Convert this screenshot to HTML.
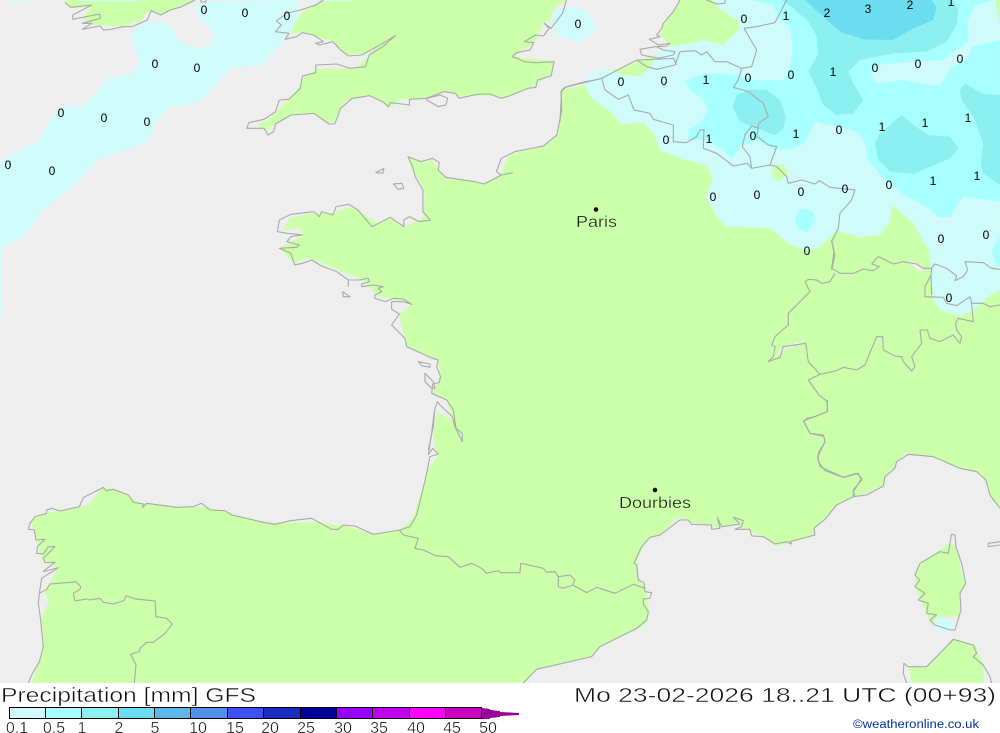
<!DOCTYPE html>
<html><head><meta charset="utf-8"><style>
html,body{margin:0;padding:0;background:#fff}
svg{display:block}
.c *{fill:none;stroke:#aaaaaa;stroke-width:1.1;vector-effect:non-scaling-stroke;stroke-linejoin:round}
.n text{font:12px "Liberation Sans",sans-serif;fill:#000;text-anchor:middle}
.l text{font:16px "Liberation Sans",sans-serif;fill:#111;text-anchor:middle;stroke:#fff;stroke-width:.35}
</style></head><body>
<svg width="1000" height="733" viewBox="0 0 1000 733" xmlns="http://www.w3.org/2000/svg">
<rect width="1000" height="683" fill="#eeeeee"/>
<g fill="#ccffaa">
<polygon points="409,158 425,162 432,160 444,177 475,182 484,184 497,178 501,173 509,155 543,146 557,135 562,107 562,90 585,85 610,70 1000,0 1000,507 992,500 988,487 980,473 960,468 933,457 905,453 897,462 893,470 885,478 883,485 867,493 853,497 837,505 827,518 815,527 815,535 790,543 777,546 763,537 752,532 748,528 733,525 717,528 712,525 690,522 678,517 660,535 647,540 637,560 638,577 645,587 650,613 647,622 640,628 600,647 592,657 537,669 523,683 32,683 37,667 42,652 43,633 41,618 49,602 45,592 58,568 43,560 39,550 31,520 38,515 88,505 103,487 113,489 128,495 138,502 173,507 207,507 227,512 267,523 320,522 333,525 343,525 373,534 400,530 413,518 428,470 438,455 433,437 437,412 453,420 452,418 447,400 432,393 438,383 440,373 438,360 433,358 407,347 399,315 412,304 375,295 367,283 358,278 343,272 310,258 293,263 280,248 303,235 300,228 283,230 290,218 313,213 333,213 350,207 360,212 377,223 372,227 388,217 400,225 405,227 423,218 425,197 421,183 411,168"/>
<g transform="scale(.3827,.3333)">
<polygon points="845,0 790,35 775,60 760,100 800,100 870,125 905,165 950,160 1030,107 985,140 930,205 830,205 790,235 780,265 745,310 700,360 670,375 695,395 720,370 760,345 820,340 860,370 875,360 900,305 965,287 1005,310 1015,325 1040,300 1120,292 1165,275 1200,290 1300,287 1320,295 1385,262 1440,225 1448,185 1380,175 1340,170 1395,130 1420,70 1440,60 1445,30 1480,0"/>
<polygon points="170,0 170,10 190,25 240,20 215,55 245,75 320,80 370,60 385,35 420,45 470,20 510,0"/>
</g>
<g transform="translate(500,400) scale(.3333)">
<polygon points="1345,430 1370,440 1385,520 1395,550 1380,590 1380,650 1310,650 1295,680 1280,640 1245,560 1245,525 1260,490 1320,450"/>
<polygon points="1225,800 1280,800 1360,718 1425,735 1450,795 1452,849 1235,849"/>
</g>
</g>
<g fill="#eeeeee" transform="translate(740,240) scale(.3333)">
<polygon points="105,352 130,320 200,298 170,315 135,330"/>
<polygon points="500,62 530,70 555,85 540,95"/>
</g>
<polygon fill="#d0fbfb" transform="translate(500,400) scale(.3333)" points="1320,650 1363,670 1360,685 1330,702 1305,675"/>

<!-- rain west -->
<g fill="#d0fbfb">
<g transform="scale(.3827,.3333)">
<polygon points="0,490 50,450 100,425 125,370 160,320 220,315 285,235 345,220 365,185 340,105 370,70 420,62 445,80 470,125 520,148 555,130 558,95 515,45 512,20 540,5 780,0 775,60 745,120 685,195 600,205 560,260 520,305 440,325 410,360 385,425 255,480 190,560 120,620 65,705 0,745"/>
<rect x="20" y="0" width="65" height="3"/><rect x="200" y="0" width="165" height="3"/><rect x="800" y="0" width="115" height="3"/><rect x="0" y="745" width="3" height="205"/>
</g>
<polygon points="550,22 556,10 570,6 585,10 595,23 592,35 577,42 563,38 553,30"/>
</g>
<g transform="translate(560,0) scale(.3333)">
<polygon fill="#d0fbfb" points="360,0 470,20 530,60 540,85 490,135 430,120 390,130 330,140 300,155 290,165 270,200 240,228 190,225 170,212 120,208 85,225 75,255 90,290 150,335 185,372 250,368 280,400 300,450 360,475 440,495 458,540 437,590 470,650 500,680 630,685 690,735 740,752 775,745 830,692 900,712 960,705 990,665 997,615 1060,670 1105,750 1115,830 1120,900 1140,930 1200,950 1240,930 1290,885 1320,870 1320,0"/>
<polygon fill="#ccffaa" points="635,510 650,490 670,495 688,518 655,545 640,530"/>
<polygon fill="#ccffaa" points="360,0 345,30 310,75 300,105 320,125 330,140 390,130 430,120 490,135 540,85 530,60 470,20 460,0"/>
<polygon fill="#ccffaa" points="170,212 230,185 290,165 270,200 240,228 190,225"/>
<polygon fill="#ccffaa" points="1305,0 1320,65 1320,0"/>
<polygon fill="#eeeeee" points="1040,778 1085,795 1090,815 1065,800"/>
<g fill="#a8ffff">
<polygon points="575,0 640,15 650,50 690,80 698,140 690,200 670,240 580,240 530,225 440,220 375,240 390,270 430,300 442,330 425,365 385,390 385,420 440,420 490,450 515,480 540,440 590,420 640,450 700,445 735,430 765,365 830,380 880,390 910,415 925,480 960,525 1040,590 1100,620 1140,652 1170,650 1210,590 1320,605 1320,120 1235,140 1225,175 1170,205 1145,250 1115,258 1030,240 950,250 935,225 950,195 1060,185 1150,180 1225,125 1225,60 1245,15 1300,0"/>
<polygon points="705,650 725,625 755,630 768,660 740,700 710,680"/>
<polygon points="1295,750 1320,710 1320,800 1305,790"/>
</g>
<g fill="#8cf0f0">
<polygon points="665,0 700,25 745,65 770,110 775,160 745,215 770,265 790,315 830,345 880,340 910,300 880,250 865,215 900,180 1000,160 1100,155 1160,125 1190,75 1195,30 1180,0"/>
<polygon points="517,320 530,285 570,268 620,270 660,300 678,350 670,385 645,405 590,385 540,365"/>
<polygon points="945,430 960,400 1025,345 1060,375 1105,405 1170,410 1195,445 1170,475 1060,522 990,515 955,480"/>
<polygon points="1200,270 1215,250 1265,280 1320,285 1320,555 1270,520 1262,490 1270,430 1240,350 1205,300"/>
</g>
<polygon fill="#6cdcf0" points="735,0 790,50 840,95 910,118 1000,120 1050,90 1120,60 1130,20 1115,0"/>
</g>

<!-- coast and borders -->
<g class="c">
<g transform="scale(.3827,.3333)">
<path d="M845,0 L825,15 L785,30 L750,40 L722,62 L735,75 L720,95 L755,100 L745,118 L775,110 L790,98 L820,105 L845,125 L825,130 L835,135 L870,125 L890,150 L910,168 L945,165 L985,140 L1033,107 L1000,140 L965,165 L955,200 L915,205 L880,192 L825,195 L825,218 L790,228 L785,265 L755,298 L730,300 L720,335 L690,358 L650,368 L645,385 L690,385 L700,405 L715,395 L720,372 L760,345 L800,342 L820,340 L845,360 L860,372 L875,372 L890,325 L920,295 L965,287 L1000,305 L1015,320 L1020,308 L1050,312 L1070,315 L1070,298 L1115,295 L1160,275 L1190,280 L1200,295 L1250,282 L1280,282 L1310,295 L1330,288 L1380,265 L1400,262 L1405,240 L1440,228 L1448,185 L1400,188 L1370,185 L1352,175 L1338,170 L1350,158 L1385,150 L1395,128 L1370,125 L1400,105 L1420,108 L1435,85 L1422,70 L1440,85 L1470,40 L1480,0"/>
<path d="M1115,295 L1150,285 L1170,295 L1165,315 L1145,320 L1115,300 Z"/>
<path d="M170,8 L185,22 L240,15 L190,45 L190,58 L260,42 L262,55 L215,70 L240,70 L215,88 L262,78 L270,90 L290,88 L320,80 L345,80 L385,60 L395,32 L420,45 L445,30 L470,22 L510,0"/>
<path d="M525,0 L525,6 L538,6 L538,0"/>
<path d="M1340,518 L1310,525 L1297,515 L1310,475 L1345,455 L1420,438 L1455,405 L1468,330 L1466,275 L1480,260 L1530,245 L1568,237"/>
<path d="M1310,525 L1265,552 L1240,545 L1165,532 L1145,510 L1148,488 L1130,475 L1100,485 L1066,470 L1078,500 L1085,530 L1105,570 L1105,635 L1125,660 L1095,665 L1070,650 L1055,660 L1055,680 L1020,652 L972,680 L935,630 L912,613 L878,620 L870,645 L840,635 L835,650 L820,635 L760,643 L730,660 L725,695 L750,700 L790,705 L760,710 L750,725 L782,735 L775,742 L730,745 L760,760 L770,795 L790,790 L815,780 L840,798 L880,815 L910,840"/>
<path d="M982,518 L1003,505 L1000,520 Z"/><path d="M1028,552 L1050,550 L1055,565 L1040,568 Z"/>
</g>
<g transform="translate(250,200) scale(.3333)">
<path d="M295,260 L295,240 L328,240 L355,235 L358,245 L335,252 L335,260 L370,255 L400,260 L385,265 L395,275 L375,285 L375,295 L405,305 L430,295 L460,297 L485,313 L460,305 L425,305 L425,328 L448,342 L425,375 L445,395 L465,415 L470,440 L548,475 L565,480 L560,500 L572,530 L567,548 L548,552 L545,580 L590,600 L610,630 L618,685 L637,700 L637,725 L615,680 L607,650 L570,615 L562,605 L555,625 L550,680 L535,750"/>
<path d="M278,275 L300,290 L280,290 Z"/><path d="M505,485 L540,492 L540,502 L515,497 Z"/><path d="M525,520 L550,545 L555,565 L545,565 L525,545 Z"/>
</g>
<g transform="translate(0,400) scale(.3333)">
<path d="M1285,165 L1298,145 L1315,162 L1290,170 L1280,220 L1265,285 L1250,345 L1230,380 L1200,390 L1120,403 L1065,378 L1030,375 L1015,388 L995,388 L935,355 L870,362 L825,373 L795,368 L695,345 L675,332 L630,330 L605,310 L580,320 L530,322 L440,310 L428,322 L430,312 L400,307 L385,285 L340,268 L318,272 L310,262 L250,293 L238,320 L180,333 L155,325 L140,330 L140,340 L105,350 L90,370 L85,388 L103,390 L108,420 L135,418 L112,440 L110,460 L130,462 L145,440 L165,440 L145,460 L130,475 L135,488 L165,487 L135,510 L130,515 L175,503 L125,535 L118,580 L115,610 L122,660 L130,740 L118,785 L95,825 L85,849"/>
<path d="M1303,35 L1295,100 L1285,165"/>
<path d="M118,580 L140,568 L150,552 L215,547 L228,545 L242,560 L240,568 L220,580 L225,603 L262,597 L270,600 L300,595 L310,607 L340,612 L372,602 L378,587 L405,597 L465,603 L468,650 L500,655 L517,672 L495,700 L460,727 L440,727 L420,745 L418,755 L392,763 L408,795 L403,849"/>
<path d="M1198,390 L1210,405 L1255,415 L1245,445 L1270,450 L1310,468 L1345,470 L1380,502 L1415,490 L1445,505 L1460,520 L1495,512 L1500,517"/>
</g>
<g transform="translate(500,400) scale(.3333)">
<path d="M0,518 L60,518 L62,490 L130,505 L140,517 L165,515 L175,530 L175,560 L190,565 L218,555 L260,578 L290,562 L345,580 L400,553 L435,565"/>
<path d="M175,530 L210,525 L225,540 L218,555"/>
<path d="M435,575 L455,578 L450,595 L430,597 L430,612 L445,635 L440,660 L410,685 L300,740 L275,770 L110,808 L70,849"/>
<path d="M435,575 L432,548 L415,540 L410,495 L402,490 L425,440 L450,412 L480,405 L540,360 L565,360 L575,373 L635,375 L635,388 L660,385 L652,352 L665,380 L700,375 L720,372 L700,352 L730,362 L725,380 L705,388 L750,388 L755,408 L790,410 L825,432 L860,425 L875,432 L870,425 L945,405 L942,385 L975,358 L1010,315 L1060,290 L1100,285 L1150,258 L1155,230 L1185,205 L1190,185 L1225,163 L1300,170 L1380,205 L1430,215 L1458,240 L1470,285 L1500,325"/>
<path d="M1060,290 L1060,270 L1085,240 L1075,220 L1030,232 L975,212 L955,185 L955,160 L975,125 L970,105 L930,100 L912,65 L920,55 L945,50 L982,35 L982,0"/>
<path d="M1355,403 L1365,405 L1368,440 L1385,490 L1397,550 L1380,580 L1383,630 L1365,690 L1350,690 L1305,675 L1290,660 L1310,645 L1280,640 L1285,610 L1255,600 L1275,580 L1245,560 L1260,540 L1245,525 L1260,490 L1320,455 L1345,460 L1350,430 Z"/>
<path d="M1475,849 L1470,830 L1450,795 L1420,770 L1430,760 L1420,735 L1360,718 L1310,770 L1280,800 L1225,800 L1212,790 L1210,820 L1220,849"/>
<path d="M1500,425 L1465,430 L1465,440 L1500,435"/>
</g>
<g transform="translate(740,240) scale(.3333)">
<path d="M275,0 L282,35 L275,85 L300,100 L340,100 L370,87 L400,92 L418,80 L395,72 L415,50 L440,62 L460,72 L490,65 L530,72 L550,85 L575,85 L585,72 L620,85 L650,108 L645,122 L670,110 L683,90 L675,65 L730,68 L755,85 L780,88"/>
<path d="M575,85 L573,105 L555,140 L555,170 L610,172 L620,190 L650,197 L690,170 L695,190 L700,245 L655,235 L647,250 L650,270 L665,290 L660,310 L640,285 L600,305 L570,295 L562,270 L540,270 L545,310 L515,350 L525,380 L515,393 L490,365 L485,350 L465,348 L430,330 L428,290 L410,290 L385,350 L375,375 L350,390 L310,382 L290,392 L240,403 L205,365 L197,310 L130,320 L120,352 L85,365 L100,350 L105,320 L95,315 L105,290 L145,255 L145,220 L210,155 L195,125 L205,118 L230,120 L245,130 L270,125 L285,100"/>
<path d="M697,190 L730,190 L750,200 L780,195"/>
<path d="M240,403 L205,420 L237,465 L262,485 L262,515 L190,543 L210,580 L252,590 L255,605 L233,650 L240,680 L310,712 L350,700 L365,715 L340,755 L345,770"/>
<path d="M573,105 L575,165"/>
</g>
<g transform="translate(560,0) scale(.3333)">
<path d="M360,0 L340,35 L310,70 L305,85 L290,105 L300,110 L268,118 L295,135 L330,130 L320,138 L285,140 L240,148 L245,165 L295,175 L340,165 L345,155 L310,150 L290,140"/>
<path d="M0,365 L5,270 L15,262 L125,235 L230,180 L290,178 L340,175 L350,195"/>
<path d="M125,235 L135,270 L175,298 L205,285 L222,330 L270,340 L280,358 L340,375 L340,425 L380,428 L410,410 L420,390 L432,390 L430,445 L470,460 L520,498 L562,490 L575,505 L630,495 L650,500 L680,530 L685,550 L725,540 L765,552 L778,542 L810,562 L885,570 L875,600 L840,640 L835,685 L815,725 L825,765 L815,810"/>
<path d="M575,505 L570,470 L547,440 L555,405 L575,378 L595,385 L590,408 L625,435 L650,440 L630,495"/>
<path d="M545,205 L535,240 L520,262 L565,275 L610,310 L625,350 L595,370 L595,385"/>
<path d="M230,180 L260,200 L290,208 L345,195 L360,155 L405,152 L425,165 L440,155 L465,185 L500,185 L545,205"/>
<path d="M440,0 L470,12 L495,10 L495,0"/>
<path d="M552,85 L590,150 L575,200 L545,205"/>
<path d="M552,85 L590,80 L645,68 L680,0"/>
</g>
</g>

<!-- numbers -->
<g class="n">
<text x="204" y="14">0</text><text x="245" y="17">0</text><text x="287" y="20">0</text><text x="155" y="68">0</text><text x="197" y="72">0</text><text x="61" y="117">0</text><text x="104" y="122">0</text><text x="147" y="126">0</text><text x="8" y="169">0</text><text x="52" y="175">0</text><text x="578" y="28">0</text>
<text x="744" y="23">0</text><text x="786" y="20">1</text><text x="827" y="17">2</text><text x="868" y="13">3</text><text x="910" y="9">2</text><text x="951" y="6">1</text>
<text x="621" y="86">0</text><text x="664" y="85">0</text><text x="706" y="84">1</text><text x="748" y="82">0</text><text x="791" y="79">0</text><text x="833" y="76">1</text><text x="875" y="72">0</text><text x="918" y="68">0</text><text x="960" y="63">0</text>
<text x="666" y="144">0</text><text x="709" y="143">1</text><text x="753" y="140">0</text><text x="796" y="138">1</text><text x="839" y="134">0</text><text x="882" y="131">1</text><text x="925" y="127">1</text><text x="968" y="122">1</text>
<text x="713" y="201">0</text><text x="757" y="199">0</text><text x="801" y="196">0</text><text x="845" y="193">0</text><text x="889" y="189">0</text><text x="933" y="185">1</text><text x="977" y="180">1</text>
<text x="807" y="255">0</text><text x="941" y="243">0</text><text x="986" y="239">0</text><text x="949" y="302">0</text>
</g>

<!-- cities -->
<circle cx="596" cy="209.500" r="2.300" fill="#111"/>
<circle cx="655" cy="490" r="2.300" fill="#111"/>
<text x="576" y="227" textLength="41" lengthAdjust="spacingAndGlyphs" font-family="Liberation Sans, sans-serif" font-size="16" fill="#111" stroke="#ccffaa" stroke-width=".35">Paris</text>
<text x="619" y="508" textLength="72" lengthAdjust="spacingAndGlyphs" font-family="Liberation Sans, sans-serif" font-size="16" fill="#111" stroke="#ccffaa" stroke-width=".35">Dourbies</text>

<!-- footer -->
<rect x="0" y="683" width="1000" height="50" fill="#fff"/>
<text x="1" y="702" textLength="255" lengthAdjust="spacingAndGlyphs" font-family="Liberation Sans, sans-serif" font-size="20" fill="#111" stroke="#fff" stroke-width=".45">Precipitation [mm] GFS</text>
<text x="574" y="702" textLength="422" lengthAdjust="spacingAndGlyphs" font-family="Liberation Sans, sans-serif" font-size="20" fill="#111" stroke="#fff" stroke-width=".45">Mo 23-02-2026 18..21 UTC (00+93)</text>
<g stroke="#000" stroke-width="1">
<rect x="9.500" y="707.500" width="36" height="11" fill="#d0fbfb"/>
<rect x="45.500" y="707.500" width="36" height="11" fill="#a8ffff"/>
<rect x="81.500" y="707.500" width="37" height="11" fill="#8cf0f0"/>
<rect x="118.500" y="707.500" width="36" height="11" fill="#6cdcf0"/>
<rect x="154.500" y="707.500" width="36" height="11" fill="#5cb8ec"/>
<rect x="190.500" y="707.500" width="37" height="11" fill="#5090ec"/>
<rect x="227.500" y="707.500" width="36" height="11" fill="#3c50f4"/>
<rect x="263.500" y="707.500" width="37" height="11" fill="#1a2cc0"/>
<rect x="300.500" y="707.500" width="36" height="11" fill="#000098"/>
<rect x="336.500" y="707.500" width="36" height="11" fill="#9800ff"/>
<rect x="372.500" y="707.500" width="37" height="11" fill="#c000ee"/>
<rect x="409.500" y="707.500" width="36" height="11" fill="#ff00ff"/>
<rect x="445.500" y="707.500" width="36" height="11" fill="#c800c0"/>
</g>
<polygon fill="#990099" points="482,708 490,709 490,710 500,711 500,712 519,713 519,715 500,716 500,717 490,718 490,719 482,719"/>
<g class="l">
<text x="17" y="733">0.1</text><text x="54" y="733">0.5</text><text x="82" y="733">1</text><text x="119" y="733">2</text><text x="155" y="733">5</text><text x="198" y="733">10</text><text x="235" y="733">15</text><text x="270" y="733">20</text><text x="306" y="733">25</text><text x="343" y="733">30</text><text x="379" y="733">35</text><text x="416" y="733">40</text><text x="452" y="733">45</text><text x="488" y="733">50</text>
</g>
<text x="853" y="728" textLength="126" lengthAdjust="spacingAndGlyphs" font-family="Liberation Sans, sans-serif" font-size="11.500" fill="#003399">©weatheronline.co.uk</text>
</svg>
</body></html>
